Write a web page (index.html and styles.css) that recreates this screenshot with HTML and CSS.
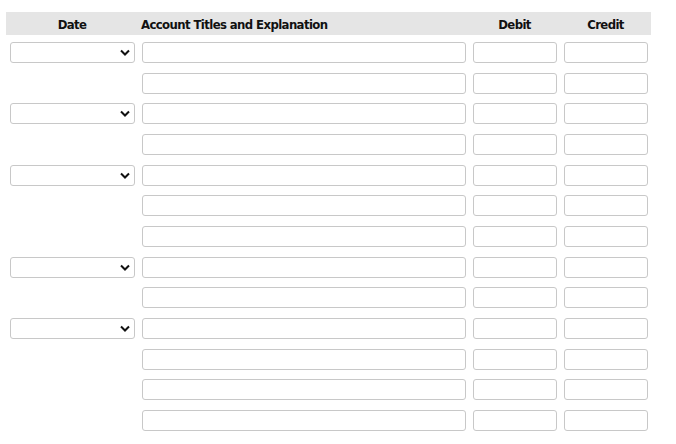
FILE: index.html
```html
<!DOCTYPE html>
<html>
<head>
<meta charset="utf-8">
<link rel="stylesheet" href="styles.css">
</head>
<body>
<div class="journal">
  <div class="head">
    <div class="h-date">Date</div>
    <div class="h-acct">Account Titles and Explanation</div>
    <div class="h-num">Debit</div>
    <div class="h-num">Credit</div>
  </div>
  <div class="rows">
    <div class="cell"><div class="sel"><svg class="chev" width="10" height="7" viewBox="0 0 10 7"><polyline points="1,1.5 5,5.5 9,1.5" fill="none" stroke="#111" stroke-width="2"/></svg></div></div>
    <div class="cell"><div class="inp acct"></div></div><div class="cell"><div class="inp num"></div></div><div class="cell"><div class="inp num"></div></div>

    <div class="cell"></div>
    <div class="cell"><div class="inp acct"></div></div><div class="cell"><div class="inp num"></div></div><div class="cell"><div class="inp num"></div></div>

    <div class="cell"><div class="sel"><svg class="chev" width="10" height="7" viewBox="0 0 10 7"><polyline points="1,1.5 5,5.5 9,1.5" fill="none" stroke="#111" stroke-width="2"/></svg></div></div>
    <div class="cell"><div class="inp acct"></div></div><div class="cell"><div class="inp num"></div></div><div class="cell"><div class="inp num"></div></div>

    <div class="cell"></div>
    <div class="cell"><div class="inp acct"></div></div><div class="cell"><div class="inp num"></div></div><div class="cell"><div class="inp num"></div></div>

    <div class="cell"><div class="sel"><svg class="chev" width="10" height="7" viewBox="0 0 10 7"><polyline points="1,1.5 5,5.5 9,1.5" fill="none" stroke="#111" stroke-width="2"/></svg></div></div>
    <div class="cell"><div class="inp acct"></div></div><div class="cell"><div class="inp num"></div></div><div class="cell"><div class="inp num"></div></div>

    <div class="cell"></div>
    <div class="cell"><div class="inp acct"></div></div><div class="cell"><div class="inp num"></div></div><div class="cell"><div class="inp num"></div></div>

    <div class="cell"></div>
    <div class="cell"><div class="inp acct"></div></div><div class="cell"><div class="inp num"></div></div><div class="cell"><div class="inp num"></div></div>

    <div class="cell"><div class="sel"><svg class="chev" width="10" height="7" viewBox="0 0 10 7"><polyline points="1,1.5 5,5.5 9,1.5" fill="none" stroke="#111" stroke-width="2"/></svg></div></div>
    <div class="cell"><div class="inp acct"></div></div><div class="cell"><div class="inp num"></div></div><div class="cell"><div class="inp num"></div></div>

    <div class="cell"></div>
    <div class="cell"><div class="inp acct"></div></div><div class="cell"><div class="inp num"></div></div><div class="cell"><div class="inp num"></div></div>

    <div class="cell"><div class="sel"><svg class="chev" width="10" height="7" viewBox="0 0 10 7"><polyline points="1,1.5 5,5.5 9,1.5" fill="none" stroke="#111" stroke-width="2"/></svg></div></div>
    <div class="cell"><div class="inp acct"></div></div><div class="cell"><div class="inp num"></div></div><div class="cell"><div class="inp num"></div></div>

    <div class="cell"></div>
    <div class="cell"><div class="inp acct"></div></div><div class="cell"><div class="inp num"></div></div><div class="cell"><div class="inp num"></div></div>

    <div class="cell"></div>
    <div class="cell"><div class="inp acct"></div></div><div class="cell"><div class="inp num"></div></div><div class="cell"><div class="inp num"></div></div>

    <div class="cell"></div>
    <div class="cell"><div class="inp acct"></div></div><div class="cell"><div class="inp num"></div></div><div class="cell"><div class="inp num"></div></div>
  </div>
</div>
</body>
</html>
```

FILE: styles.css
```css
html, body {
  margin: 0;
  padding: 0;
  background: #ffffff;
}
body {
  font-family: "DejaVu Sans Condensed", "DejaVu Sans", sans-serif;
  color: #111;
}
.journal {
  padding: 12px 0 0 6px;
  width: 645px;
}
.head {
  box-sizing: border-box;
  display: grid;
  grid-template-columns: 132px 331px 91px 91px;
  height: 23px;
  padding-top: 2px;
  background: #e5e5e5;
  align-items: center;
  font-weight: bold;
  font-size: 13px;
  letter-spacing: -0.6px;
}
.h-date { text-align: center; }
.h-acct { padding-left: 3px; }
.h-num { text-align: center; }
.rows {
  display: grid;
  grid-template-columns: 132px 331px 91px 91px;
  grid-auto-rows: 30.67px;
  padding-top: 7px;
}
.cell {
  padding-left: 4px;
}
.sel, .inp {
  box-sizing: border-box;
  height: 21px;
  border: 1px solid #c8c8c8;
  border-radius: 3px;
  background: #fff;
}
.sel {
  width: 125px;
  display: flex;
  align-items: center;
  justify-content: flex-end;
  padding-right: 4px;
}
.acct { width: 324px; }
.num { width: 84px; }
.chev { display: block; }
```
